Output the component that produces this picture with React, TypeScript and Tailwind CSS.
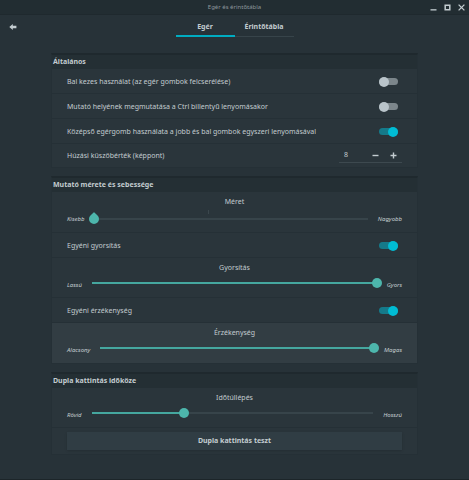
import { useId, useState } from "react";
import type { CSSProperties, ReactNode } from "react";
import clsx from "clsx";

function Section({ title, children }: { title: string; children: ReactNode }) {
  return (
    <section className="border border-t-2 border-[#253036] border-t-[#1f292e] bg-[#2a353b]">
      <h2 className="h-[14px] bg-[#242f34] px-px text-[7px] leading-[13px] font-bold text-[#c3ccd0]">{title}</h2>
      <div className="divide-y divide-[#253036]">{children}</div>
    </section>
  );
}

function SwitchRow({ label, initial = false }: { label: string; initial?: boolean }) {
  const [on, setOn] = useState(initial);

  return (
    <label className="flex h-[25px] items-center justify-between pt-px pr-[19px] pl-[15px]">
      {label}
      <input
        type="checkbox"
        role="switch"
        checked={on}
        onChange={(e) => setOn(e.target.checked)}
        className={clsx(
          "flex h-[7px] w-[19px] appearance-none items-center rounded-full before:size-[10px] before:shrink-0 before:rounded-full before:content-['']",
          on ? "justify-end bg-[#157a8a] before:bg-[#00bcd4]" : "bg-[#7c868b] before:bg-[#b9c4ca]"
        )}
      />
    </label>
  );
}

type SliderRowProps = {
  title: string;
  low: string;
  high: string;
  initial: number;
  marked?: boolean;
  active?: boolean;
};

function SliderRow({ title, low, high, initial, marked, active }: SliderRowProps) {
  const id = useId();
  const [value, setValue] = useState(initial);

  return (
    <div className={clsx("px-[15px]", marked ? "h-[41px]" : "h-[40px]", active && "bg-[#323d43]")}>
      <label htmlFor={id} className="block h-[20px] text-center leading-[19px]">
        {title}
      </label>
      <div className="flex h-[13px] items-center gap-[5px] text-[6px] italic">
        <span>{low}</span>
        <div className={clsx("relative flex flex-1", !marked && "mb-[3px]")}>
          {marked && <span className="absolute -top-1 left-[42%] h-1 w-px bg-[#3b474d]" />}
          <input
            id={id}
            type="range"
            min={0}
            max={100}
            value={value}
            onChange={(e) => setValue(Number(e.target.value))}
            style={{ "--fill": `${value}%` } as CSSProperties}
            className={clsx(
              "h-[10px] w-full appearance-none bg-[linear-gradient(to_right,#45a79f_var(--fill),#37444a_var(--fill))] bg-[length:calc(100%-10px)_2px] bg-center bg-no-repeat [&::-webkit-slider-thumb]:size-[10px] [&::-webkit-slider-thumb]:appearance-none [&::-webkit-slider-thumb]:bg-[#4db6ac]",
              marked
                ? "[&::-webkit-slider-thumb]:rotate-45 [&::-webkit-slider-thumb]:rounded-[1px_50%_50%_50%]"
                : "[&::-webkit-slider-thumb]:rounded-full"
            )}
          />
        </div>
        <span>{high}</span>
      </div>
    </div>
  );
}

function ThresholdRow() {
  const [value, setValue] = useState(8);

  return (
    <div className="flex h-[23px] items-center justify-between px-[15px]">
      <label htmlFor="threshold">Húzási küszöbérték (képpont)</label>
      <div className="flex h-[15px] w-[63px] items-center border-b border-[#3d494f]">
        <input
          id="threshold"
          type="text"
          inputMode="numeric"
          value={value}
          onChange={(e) => setValue(Number(e.target.value) || 0)}
          className="w-[28px] bg-transparent pl-[5px] outline-none"
        />
        <button
          type="button"
          aria-label="Csökkentés"
          onClick={() => setValue(value - 1)}
          className="flex h-full w-[17px] items-center justify-center"
        >
          <svg viewBox="0 0 7 7" className="size-[7px] fill-[#c3ccd0]">
            <path d="M.5 2.8h6v1.4h-6z" />
          </svg>
        </button>
        <button
          type="button"
          aria-label="Növelés"
          onClick={() => setValue(value + 1)}
          className="flex h-full w-[18px] items-center justify-center"
        >
          <svg viewBox="0 0 7 7" className="size-[7px] fill-[#c3ccd0]">
            <path d="M.5 2.8h2.3V.5h1.4v2.3h2.3v1.4H4.2v2.3H2.8V4.2H.5z" />
          </svg>
        </button>
      </div>
    </div>
  );
}

const tabs = ["Egér", "Érintőtábla"];

export default function App() {
  const [tab, setTab] = useState("Egér");

  return (
    <div className="flex min-h-screen flex-col border-b border-[#1c2529] bg-[#273238] font-['Noto_Sans',sans-serif] text-[7px] leading-[10px] text-[#c3ccd0]">
      <header className="grid h-[15px] grid-cols-[1fr_auto_1fr] items-center border-b border-[#1f292e] bg-[#222d32]">
        <h1 className="col-start-2 text-[6px] text-[#8d979c]">Egér és érintőtábla</h1>
        <div className="flex justify-end gap-[7px] pr-1 text-[#c3ccd0]">
          <button type="button" aria-label="Kis méret">
            <svg viewBox="0 0 7 7" className="size-[7px] fill-current">
              <path d="M.5 5.2h6v1.3h-6z" />
            </svg>
          </button>
          <button type="button" aria-label="Teljes méret">
            <svg viewBox="0 0 7 7" className="size-[7px] fill-none stroke-current">
              <path d="M1.2 1.2h4.6v4.6H1.2z" strokeWidth="1.5" />
            </svg>
          </button>
          <button type="button" aria-label="Bezárás">
            <svg viewBox="0 0 7 7" className="size-[7px] fill-none stroke-current">
              <path d="M.6.6l5.8 5.8M6.4.6L.6 6.4" strokeWidth="1.3" />
            </svg>
          </button>
        </div>
      </header>

      <nav className="grid h-[38px] grid-cols-[1fr_auto_1fr] items-start px-[9px] pt-1">
        <button type="button" aria-label="Vissza" className="flex h-4 w-2 items-center">
          <svg viewBox="0 0 8 6" className="h-[6px] w-[8px] fill-[#c3ccd0]">
            <path d="M.3 3L3.8 0v1.7h3.6v2.6H3.8V6z" />
          </svg>
        </button>
        <div role="tablist" className="flex">
          {tabs.map((t) => (
            <button
              key={t}
              type="button"
              role="tab"
              aria-selected={tab === t}
              onClick={() => setTab(t)}
              className={clsx(
                "flex h-[18px] w-[59px] justify-center pt-[3px] font-bold",
                tab === t ? "border-b-2 border-[#00acc1]" : "border-b border-[#37444a]"
              )}
            >
              {t}
            </button>
          ))}
        </div>
      </nav>

      <main className="flex flex-col gap-2 px-[51px]">
        <Section title="Általános">
          <SwitchRow label="Bal kezes használat (az egér gombok felcserélése)" />
          <SwitchRow label="Mutató helyének megmutatása a Ctrl billentyű lenyomásakor" />
          <SwitchRow label="Középső egérgomb használata a jobb és bal gombok egyszeri lenyomásával" initial />
          <ThresholdRow />
        </Section>

        <Section title="Mutató mérete és sebessége">
          <SliderRow title="Méret" low="Kisebb" high="Nagyobb" initial={0} marked />
          <SwitchRow label="Egyéni gyorsítás" initial />
          <SliderRow title="Gyorsítás" low="Lassú" high="Gyors" initial={100} />
          <SwitchRow label="Egyéni érzékenység" initial />
          <SliderRow title="Érzékenység" low="Alacsony" high="Magas" initial={100} active />
        </Section>

        <Section title="Dupla kattintás időköze">
          <SliderRow title="Időtúllépés" low="Rövid" high="Hosszú" initial={33} />
          <div className="px-[15px] py-1">
            <button type="button" className="h-[18px] w-full bg-[#303d44] font-bold shadow-sm">
              Dupla kattintás teszt
            </button>
          </div>
        </Section>
      </main>
    </div>
  );
}
